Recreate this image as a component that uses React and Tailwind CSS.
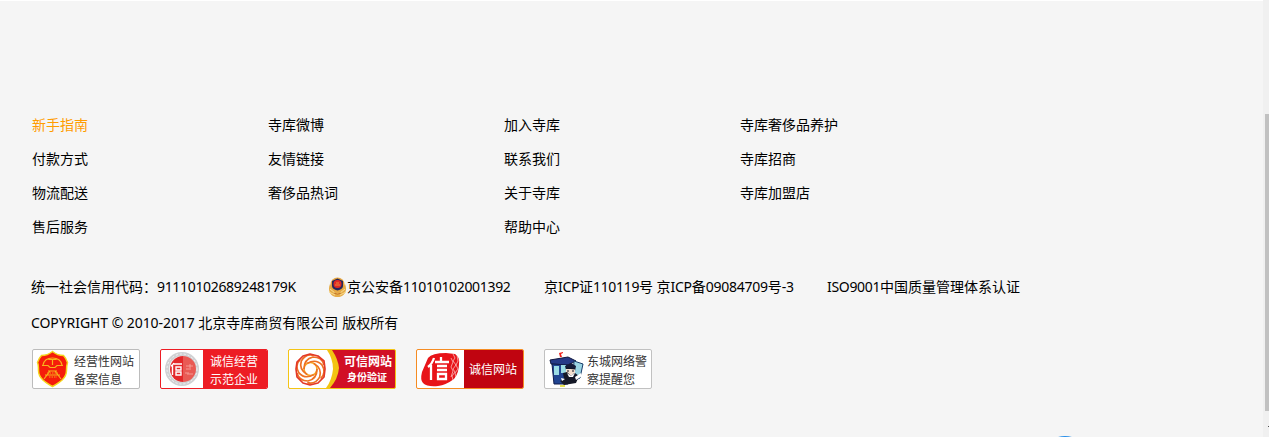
import React from 'react';

const columns = [
  ['新手指南', '付款方式', '物流配送', '售后服务'],
  ['寺库微博', '友情链接', '奢侈品热词'],
  ['加入寺库', '联系我们', '关于寺库', '帮助中心'],
  ['寺库奢侈品养护', '寺库招商', '寺库加盟店'],
];

function Latin({ children, className = 'tracking-[-0.33px]' }) {
  return <span className={`font-['Noto_Sans'] text-[14px] ${className}`}>{children}</span>;
}

function PoliceEmblem() {
  return (
    <svg className="mt-[2px] h-5 w-[19px] shrink-0" viewBox="0 0 19 20">
      <path d="M2 7C-1 14 3 20 9.5 20S20 14 17 7l-3 5H5Z" fill="#e6ac48" />
      <path d="M2 12l5 4M1 15l6 3M17 12l-5 4M18 15l-6 3" stroke="#f8dc91" strokeWidth="1" />
      <circle cx="9.500" cy="7.500" r="7" fill="#e5a540" />
      <path d="M9.500 1.500 15 4v5c0 2-2 3.500-5.500 4.500C6 12.500 4 11 4 9V4Z" fill="#27285c" />
      <circle cx="9.500" cy="7" r="4" fill="#df2926" />
      <path d="M7 8h5M8 6h3" stroke="#f0a33e" strokeWidth=".8" />
      <path d="M6 16q3.500 2.500 7 0" stroke="#c5772d" fill="none" />
    </svg>
  );
}

function BusinessShield() {
  return (
    <svg className="h-[38px] w-[38px] shrink-0" viewBox="0 0 38 38">
      <path d="M19.500 1.500q5 4 11 4 2 2 4 7-1 3-1 8c0 8-7 12-14 16-7-4-14-8-14-16 0-5 0-6-1-8q2-5 4-7 6 0 11-4Z" fill="#f51c0b" stroke="#f4d51c" strokeWidth="1.500" />
      <path d="M10 15c1-5 5-7 9.500-7s8.500 2 9.500 7M15.500 9.500h8M19.500 10v5M9 15.500h6l2 2h5l2-2h6M12 25h15M11 29l6-8M28 29l-6-8M15 21h9" fill="none" stroke="#f7b51c" strokeWidth="1.200" />
      <path d="M14 23h11M16 27h8" stroke="#f5a51a" strokeDasharray="1.500 1" />
    </svg>
  );
}

function IntegritySeal() {
  return (
    <svg className="h-[38px] w-[42px] shrink-0" viewBox="0 0 42 38">
      <circle cx="21" cy="19" r="15" fill="#f4f0f0" stroke="#d0d1d3" strokeWidth="4" />
      <circle cx="21" cy="19" r="15" fill="none" stroke="#f4f4f4" strokeWidth="1" strokeDasharray="2 2" />
      <path d="M22 6a13 13 0 1 0 0 26Z" fill="#e3282a" />
      <path d="M22 6a13 13 0 0 1 0 26Z" fill="#e95a54" />
      <path d="M25 16h7m-7 3h5m-6 4h4m1-9v4m-3 6h6" stroke="#f6aaa3" strokeWidth=".8" />
      <path d="M13 13q-1 2-3 3M11.500 15v10M13 14h8M15 17h5v3h-5ZM15 22v3h5v-3Z" fill="none" stroke="#fff" strokeWidth="1.400" />
    </svg>
  );
}

function TrustedKnot() {
  return (
    <svg className="h-[38px] w-[51px] shrink-0" viewBox="0 0 51 38">
      <path d="M0 0h43q6 9 7 18-1 11-9 20H0Z" fill="#f3c412" />
      <path d="M0 0h38q6 9 6 19-1 11-7 19H0Z" fill="#fff" />
      <g fill="none" strokeWidth="1.700">
        <circle cx="21.500" cy="19" r="6.500" stroke="#f6aa24" />
        <g stroke="#ee7124">
          <path d="M15 19q0-10 9-12 9 0 11 8" />
          <path d="M15 19q0-10 9-12 9 0 11 8" transform="rotate(60 21.500 19)" />
          <path d="M15 19q0-10 9-12 9 0 11 8" transform="rotate(120 21.500 19)" />
          <path d="M15 19q0-10 9-12 9 0 11 8" transform="rotate(180 21.500 19)" />
          <path d="M15 19q0-10 9-12 9 0 11 8" transform="rotate(240 21.500 19)" />
          <path d="M15 19q0-10 9-12 9 0 11 8" transform="rotate(300 21.500 19)" />
        </g>
        <path d="m14 6 7-2 8 2 6 5 1 8-1 8-6 6-8 2-7-2-6-6-1-8 1-7Z" stroke="#e33828" strokeLinejoin="round" />
      </g>
    </svg>
  );
}

function CreditStamp() {
  return (
    <svg className="h-[38px] w-[47px] shrink-0" viewBox="0 0 47 38">
      <path d="M11 8Q15 3 29 3l9 1q5 3 4 10 0 9-5 15-8 6-16 7-11 1-15-3-3-3-1-11Z" fill="#e81419" />
      <path d="m36 4 2 4-2 3 3 4-3 4 2 3-3 4 1 4m4-25 1 6-2 4 2 4-3 4 1 4-2 4M34 8l2 4-2 5 2 4-2 6" fill="none" stroke="#fff" strokeWidth=".8" opacity=".7" />
      <path d="M17 8q-2 6-6 9M14 15v15M24 7v4M18 12h14M20 16h10M20 20h10M21 24h8v5h-8Z" fill="none" stroke="#fff" strokeWidth="2.300" />
    </svg>
  );
}

function OfficerBooth() {
  return (
    <svg className="h-[38px] w-[42px] shrink-0" viewBox="0 0 42 38">
      <path d="m5 10 18-3 8 4-8 4-17-1Z" fill="#263a87" stroke="#11183e" />
      <path d="m7 14 16 1v19H9Z" fill="#214592" stroke="#101c4c" />
      <path d="M9 16h5v9H9ZM16 15h5v8h-5Z" fill="#9bdce5" />
      <path d="m29 11 9 3-3 14-7 3Z" fill="#9bd4e3" stroke="#173b68" />
      <path d="m15 7-1-4 4-1v1l-2 1 1 3" fill="#ed211c" />
      <path d="m20 16 6-3 5 3-1 5-9-1Z" fill="#151b38" />
      <path d="M21 19h9v4l-4 2-5-2Z" fill="#f4dfcd" />
      <path d="m18 23 4-1 4 4 4-3 4 3-3 7-12 2-4-4 4-2Z" fill="#151927" />
      <path d="m22 23 4 3 4-3-2 4h-4ZM16 28l4 1-3 2M30 27l6-4 1 3-6 4Z" fill="#fff" />
      <path d="m21 18 9 1M22 21h2m3 0h2" stroke="#101323" />
      <path d="M15 36h5" stroke="#ded719" strokeWidth="1.500" />
    </svg>
  );
}

const badge = 'flex h-10 w-[108px] overflow-hidden rounded-[2px] border';
const lines = 'text-[12px] leading-[18px] whitespace-nowrap';

export default function App() {
  return (
    <div className="flex h-[437px] w-full overflow-hidden bg-[#f5f5f5] font-['Noto_Sans_CJK_SC',sans-serif] text-[14px] text-black">
      <main className="relative flex min-w-0 flex-1 flex-col border-t border-white pl-[31px]">
        <nav className="mt-[106px] grid grid-cols-[236px_236px_236px_236px] pl-px">
          {columns.map((items, column) => (
            <ul key={column}>
              {items.map((item, row) => (
                <li key={item} className={`h-[34px] leading-[34px] ${column === 0 && row === 0 ? 'text-[#ff9c00]' : ''}`}>
                  {item}
                </li>
              ))}
            </ul>
          ))}
        </nav>

        <div className="mt-[25px] flex h-9 items-center whitespace-nowrap leading-9">
          <div className="w-[297px]">统一社会信用代码：<Latin>91110102689248179K</Latin></div>
          <div className="flex w-[216px] items-center">
            <PoliceEmblem />
            <span>京公安备<Latin>11010102001392</Latin></span>
          </div>
          <div className="w-[283px]">
            京<Latin className="tracking-[-0.35px]">ICP</Latin>证<Latin>110119</Latin>号
            <Latin> </Latin>京<Latin className="tracking-[-0.25px]">ICP</Latin>备<Latin className="tracking-[-0.25px]">09084709</Latin>号<Latin>-3</Latin>
          </div>
          <div><Latin>ISO9001</Latin>中国质量管理体系认证</div>
        </div>
        <div className="h-9 whitespace-nowrap leading-9">
          <Latin className="tracking-[-0.07px]">COPYRIGHT © 2010-2017 </Latin>北京寺库商贸有限公司<Latin className="tracking-[0.3px]"> </Latin>版权所有
        </div>

        <div className="mt-[9px] ml-px flex gap-5">
          <div className={`${badge} border-[#bcbcbc] bg-white text-[#333]`}>
            <BusinessShield />
            <div className={`${lines} ml-[3px] pt-[2px]`}>经营性网站<br />备案信息</div>
          </div>
          <div className={`${badge} border-[#ed1c24] bg-white`}>
            <IntegritySeal />
            <div className={`${lines} flex-1 bg-[#ed1c24] pt-[2px] pl-[7px] text-white`}>诚信经营<br />示范企业</div>
          </div>
          <div className={`${badge} border-[#f4c515] bg-[#d10f25]`}>
            <TrustedKnot />
            <div className="ml-1 pt-[2px] font-bold whitespace-nowrap text-white">
              <div className="text-[12px] leading-[18px]">可信网站</div>
              <div className="pl-[3px] text-[10px] leading-[14px]">身份验证</div>
            </div>
          </div>
          <div className={`${badge} border-[#f58c23] bg-white`}>
            <CreditStamp />
            <div className="flex-1 bg-[#c00410] pl-[5px] text-[12px] leading-[37px] text-white">诚信网站</div>
          </div>
          <div className={`${badge} border-[#c1c1c1] bg-white text-[#333]`}>
            <OfficerBooth />
            <div className={`${lines} pt-[2px]`}>东城网络警<br />察提醒您</div>
          </div>
        </div>
        <div className="absolute top-[435px] left-[1041px] size-12 rounded-full bg-[#288ee9]" />
      </main>
      <aside className="flex w-[6px] shrink-0 flex-col items-end bg-[#f0f0f0]">
        <div className="mt-[114px] h-[297px] w-1 bg-[#c1c1c1]" />
        <div className="mt-[15px] h-px w-px bg-[#505050]" />
      </aside>
    </div>
  );
}
